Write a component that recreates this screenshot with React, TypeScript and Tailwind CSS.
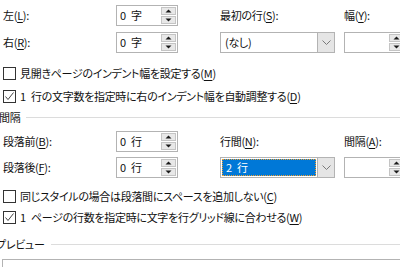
import React from "react";

const U = ({ c }: { c: string }) => (
  <span className="underline decoration-[1px] underline-offset-[2px]">{c}</span>
);

const SpinArrows = () => (
  <div className="mr-[1px] flex h-[17px] w-[15px] flex-col gap-[1px]">
    <div className="flex h-[8px] items-center justify-center border border-[#c4c4c4] bg-[#e8e8e8]">
      <svg width="7" height="4" viewBox="0 0 7 4">
        <path d="M0.5 3.5 L3.5 0.5 L6.5 3.5 Z" fill="#1a1a1a" />
      </svg>
    </div>
    <div className="flex h-[8px] items-center justify-center border border-[#c4c4c4] bg-[#e8e8e8]">
      <svg width="7" height="4" viewBox="0 0 7 4">
        <path d="M0.5 0.5 L3.5 3.5 L6.5 0.5 Z" fill="#1a1a1a" />
      </svg>
    </div>
  </div>
);

const Spin = ({ value, w = "w-[62px]" }: { value: string; w?: string }) => (
  <div
    className={`flex h-[21px] ${w} shrink-0 items-center border border-[#b3b3b3] bg-white`}
  >
    <span className="flex-1 whitespace-pre pl-[3px]">{value}</span>
    <SpinArrows />
  </div>
);

const Chevron = () => (
  <svg width="9" height="5" viewBox="0 0 9 5">
    <path d="M0.5 0.5 L4.5 4.5 L8.5 0.5" fill="none" stroke="#7a7a7a" strokeWidth="1" />
  </svg>
);

const Combo = ({ value, selected }: { value: string; selected?: boolean }) => (
  <div className="flex h-[21px] w-[115px] items-stretch border border-[#b3b3b3] bg-white">
    <div className="flex flex-1 items-center p-[1px]">
      {selected ? (
        <div className="flex h-full w-full items-center whitespace-pre border border-dotted border-[#f0a030] bg-[#0078d7] pl-[3px] text-white">
          {value}
        </div>
      ) : (
        <span className="pl-[3px]">{value}</span>
      )}
    </div>
    <div className="flex w-[17px] items-center justify-center border-l border-[#b3b3b3] bg-[#e5e5e5]">
      <Chevron />
    </div>
  </div>
);

const CheckRow = ({ checked, children }: { checked?: boolean; children: React.ReactNode }) => (
  <div className="flex h-[13px] items-center gap-[4px] pl-[3px]">
    <div className="flex h-[13px] w-[13px] shrink-0 items-center justify-center border border-[#333333] bg-white">
      {checked && (
        <svg width="11" height="11" viewBox="0 0 11 11">
          <path d="M1.5 5.5 L4 8.5 L9.5 1.5" fill="none" stroke="#444444" strokeWidth="1" />
        </svg>
      )}
    </div>
    <span className="whitespace-pre">{children}</span>
  </div>
);

const GroupHeader = ({ label, lineFrom }: { label: string; lineFrom: string }) => (
  <div className="flex h-[16px] items-center">
    <span className={`whitespace-nowrap ${lineFrom}`}>{label}</span>
    <div className="ml-[6px] h-px flex-1 bg-[#dcdcdc]" />
  </div>
);

export default function App() {
  return (
    <div
      className="h-[267px] w-[400px] overflow-hidden bg-white text-[11px] leading-none tracking-[-0.3px] text-[#111] [font-feature-settings:'palt']"
      style={{ fontFamily: '"Noto Sans CJK JP", "Noto Sans", sans-serif' }}
    >
      <div className="grid grid-cols-[113px_104px_124px_1fr] gap-y-[6px] pl-[3px] pt-[5px]">
        <div className="flex h-[21px] items-center">
          左(<U c="L" />):
        </div>
        <Spin value={"0\u2002字"} />
        <div className="flex h-[21px] items-center">
          最初の行(<U c="S" />):
        </div>
        <div className="flex h-[21px] items-center">
          幅(<U c="Y" />):
        </div>

        <div className="flex h-[21px] items-center">
          右(<U c="R" />):
        </div>
        <Spin value={"0\u2002字"} />
        <Combo value="(なし)" />
        <Spin value="" />
      </div>

      <div className="mt-[14px] flex flex-col gap-[10px]">
        <CheckRow>
          見開きページのインデント幅を設定する(<U c="M" />)
        </CheckRow>
        <CheckRow checked>
          {"1\u2002行の文字数を指定時に右のインデント幅を自動調整する("}
          <U c="D" />)
        </CheckRow>
      </div>

      <div className="mt-[6px]">
        <GroupHeader label="間隔" lineFrom="-ml-[1px]" />
      </div>

      <div className="mt-[6px] grid grid-cols-[113px_104px_124px_1fr] gap-y-[5px] pl-[3px]">
        <div className="flex h-[21px] items-center">
          段落前(<U c="B" />):
        </div>
        <Spin value={"0\u2002行"} />
        <div className="flex h-[21px] items-center">
          行間(<U c="N" />):
        </div>
        <div className="flex h-[21px] items-center">
          間隔(<U c="A" />):
        </div>

        <div className="flex h-[21px] items-center">
          段落後(<U c="F" />):
        </div>
        <Spin value={"0\u2002行"} />
        <Combo value={"2\u2002行"} selected />
        <Spin value="" />
      </div>

      <div className="mt-[12px] flex flex-col gap-[8px]">
        <CheckRow>
          同じスタイルの場合は段落間にスペースを追加しない(<U c="C" />)
        </CheckRow>
        <CheckRow checked>
          {"1\u2002ページの行数を指定時に文字を行グリッド線に合わせる("}
          <U c="W" />)
        </CheckRow>
      </div>

      <div className="mt-[12px]">
        <GroupHeader label="プレビュー" lineFrom="-ml-[4px]" />
      </div>

      <div className="ml-[2px] mt-[7px] h-[30px] w-[420px] border border-[#b3b3b3] bg-white" />
    </div>
  );
}
